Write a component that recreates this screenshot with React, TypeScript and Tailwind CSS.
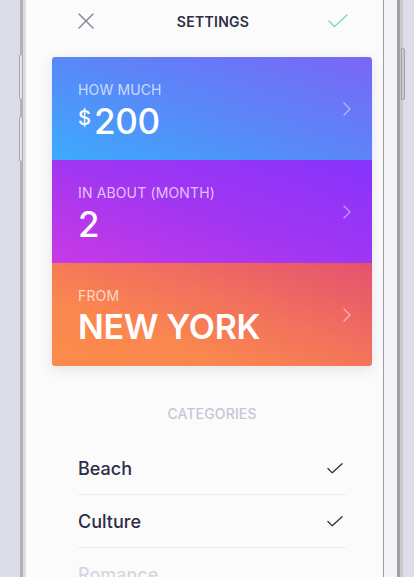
import React from "react";

const font = { fontFamily: "Inter, 'Noto Sans', sans-serif" };

function Chevron() {
  return (
    <svg width="8" height="14" viewBox="0 0 8 14" fill="none" className="opacity-50">
      <path d="M1 1l6 6-6 6" stroke="white" strokeWidth="1.3" strokeLinecap="round" strokeLinejoin="round" />
    </svg>
  );
}

function Check({ color, w = 16, sw = 1.6 }: { color: string; w?: number; sw?: number }) {
  return (
    <svg width={w} height={Math.round(w * 0.7)} viewBox="0 0 20 14" fill="none">
      <path d="M1 7l5.5 5.5L19 1" stroke={color} strokeWidth={sw} strokeLinecap="round" strokeLinejoin="round" />
    </svg>
  );
}

function Section({
  bg,
  label,
  children,
}: {
  bg: string;
  label: string;
  children: React.ReactNode;
}) {
  return (
    <div className={`h-[103px] shrink-0 flex items-center justify-between pl-[26px] pr-[21px] ${bg}`}>
      <div className="flex flex-col pt-[2px]">
        <div className="text-[14px] leading-none text-white/70 tracking-[0.01em]">{label}</div>
        {children}
      </div>
      <Chevron />
    </div>
  );
}

export default function App() {
  return (
    <div className="w-[414px] h-[577px] overflow-hidden flex bg-[#dddce9] relative" style={font}>
      {/* left buttons */}
      <div className="absolute left-[19px] top-[54px] w-[4px] h-[46px] rounded-l-[2px] border border-[#a8a8b0] bg-[#e4e4ea]" />
      <div className="absolute left-[19px] top-[116px] w-[4px] h-[46px] rounded-l-[2px] border border-[#a8a8b0] bg-[#e4e4ea]" />
      {/* right button */}
      <div className="absolute left-[401px] top-[48px] w-[4px] h-[52px] rounded-r-[2px] border border-[#a0a0a8] bg-[#c9c9d1]" />

      <div className="w-[20px] shrink-0" />
      <div className="w-[3px] shrink-0 bg-[#b2b2ba]" />
      <div className="w-[3px] shrink-0 bg-[#dcdce2]" />

      {/* screen */}
      <div className="w-[357px] shrink-0 bg-[#fbfbfc] flex flex-col overflow-hidden">
        {/* header */}
        <div className="h-[41px] shrink-0 flex items-center pl-[52px] pr-[35px] pt-[1px]">
          <svg width="16" height="16" viewBox="0 0 16 16" fill="none">
            <path d="M1 1l14 14M15 1L1 15" stroke="#8b8b96" strokeWidth="1.5" strokeLinecap="round" />
          </svg>
          <div className="flex-1 text-center text-[14px] font-semibold tracking-[0.02em] text-[#2e2e44] pl-[4px]">
            SETTINGS
          </div>
          <Check color="#7fe0aa" w={20} sw={1.6} />
        </div>

        {/* card */}
        <div className="shrink-0 ml-[26px] mt-[16px] w-[320px] rounded-[3px] overflow-hidden shadow-[0_4px_14px_rgba(40,40,80,0.10)] flex flex-col">
          <Section bg="bg-[linear-gradient(200deg,#7a66f6_0%,#5a86f8_50%,#3cabfd_100%)]" label="HOW MUCH">
            <div className="flex items-start mt-[9px] text-white">
              <span className="text-[20px] font-medium leading-none mt-[2px] mr-[3px]">$</span>
              <span className="text-[35px] font-medium leading-[30px] tracking-[-0.01em]">200</span>
            </div>
          </Section>
          <Section bg="bg-[linear-gradient(200deg,#8733fc_0%,#a036f2_50%,#c83ae5_100%)]" label="IN ABOUT (MONTH)">
            <div className="mt-[9px] text-white text-[35px] font-medium leading-[30px]">2</div>
          </Section>
          <Section bg="bg-[linear-gradient(200deg,#e4526f_0%,#f2705d_40%,#fa874f_70%,#fb8b4a_100%)]" label="FROM">
            <div className="mt-[9px] text-white text-[34px] font-semibold leading-[30px] tracking-[-0.01em]">NEW YORK</div>
          </Section>
        </div>

        {/* categories */}
        <div className="shrink-0 ml-[26px] w-[320px] mt-[37px] text-center text-[14px] font-medium text-[#c5c7d4] tracking-[0.01em]">
          CATEGORIES
        </div>
        <div className="shrink-0 ml-[52px] w-[268px] mt-[18px] flex flex-col">
          {[
            { name: "Beach", on: true },
            { name: "Culture", on: true },
            { name: "Romance", on: false },
          ].map((c) => (
            <div
              key={c.name}
              className="h-[53px] shrink-0 flex items-center justify-between border-b border-[#ececf0] pr-[3px]"
            >
              <span className={`text-[18px] font-medium ${c.on ? "text-[#2d2d46]" : "text-[#d6d6e0]"}`}>{c.name}</span>
              {c.on && <Check color="#2d2d46" w={16} sw={1.6} />}
            </div>
          ))}
        </div>
      </div>

      <div className="w-[1px] shrink-0 bg-[#9c9ca4]" />
      <div className="w-[13px] shrink-0 bg-[#f4f4f7]" />
      <div className="w-[3px] shrink-0 bg-[#a0a0a8]" />
      <div className="w-[3px] shrink-0 bg-[#c8c8d0]" />
      <div className="flex-1" />
    </div>
  );
}
